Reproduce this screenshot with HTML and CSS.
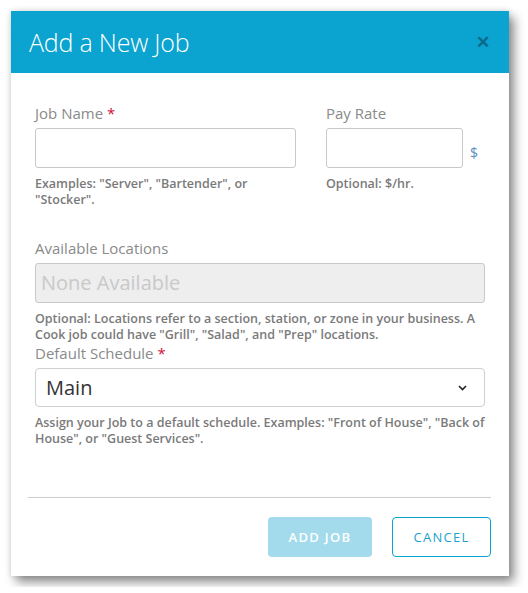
FILE: index.html
```html
<!DOCTYPE html>
<html lang="en">
<head>
    <meta charset="UTF-8">
    <meta name="viewport" content="width=device-width, initial-scale=1.0">
    <title>Add a New Job</title>
    <link rel="stylesheet" href="styles.css">
</head>
<body>
    <div class="modal">
        <div class="modal-header">
            <h1>Add a New Job</h1>
            <span class="close">&#10005;</span>
        </div>

        <div class="modal-body">
            <div class="row">
                <div class="field job-name">
                    <label>Job Name <span class="req">*</span></label>
                    <input type="text" class="text-input">
                    <p class="help">Examples: "Server", "Bartender", or "Stocker".</p>
                </div>
                <div class="field pay-rate">
                    <label>Pay Rate</label>
                    <div class="pay-line">
                        <input type="text" class="text-input">
                        <span class="dollar">$</span>
                    </div>
                    <p class="help">Optional: $/hr.</p>
                </div>
            </div>

            <div class="field locations">
                <label>Available Locations</label>
                <div class="text-input disabled">None Available</div>
                <p class="help">Optional: Locations refer to a section, station, or zone in your business. A Cook job could have "Grill", "Salad", and "Prep" locations.</p>
            </div>

            <div class="field">
                <label>Default Schedule <span class="req">*</span></label>
                <div class="select-wrap">
                    <select class="select">
                        <option>Main</option>
                    </select>
                    <svg class="chevron" width="9" height="6" viewBox="0 0 9 6">
                        <path d="M1 1 L4.5 4.5 L8 1" fill="none" stroke="#222" stroke-width="1.6"/>
                    </svg>
                </div>
                <p class="help">Assign your Job to a default schedule. Examples: "Front of House", "Back of House", or "Guest Services".</p>
            </div>
        </div>

        <div class="modal-footer">
            <div class="actions">
                <button class="btn btn-primary">ADD JOB</button>
                <button class="btn btn-outline">CANCEL</button>
            </div>
        </div>
    </div>
</body>
</html>
```

FILE: styles.css
```css
body {
    margin: 0;
    padding: 11px;
    background: #fff;
    font-family: 'Open Sans', 'Liberation Sans', sans-serif;
}
.modal {
    width: 498px;
    background: #fff;
    box-shadow: 5px 6px 10px rgba(0, 0, 0, 0.45), 0 0 6px rgba(0, 0, 0, 0.12);
}
.modal-header {
    height: 62px;
    background: #0ba3cf;
    display: flex;
    align-items: center;
    justify-content: space-between;
    padding: 0 19px 0 18px;
}
.modal-header h1 {
    margin: 0;
    font-size: 25px;
    font-weight: 300;
    color: #fff;
    letter-spacing: -0.2px;
}
.close {
    color: #0a6a8c;
    font-size: 17px;
    font-weight: bold;
    margin-top: -2px;
}
.modal-body {
    padding: 30px 24px 50px;
}
.row {
    display: flex;
    gap: 30px;
    margin-bottom: 30px;
}
.job-name {
    width: 261px;
}
.pay-rate {
    flex: 1;
}
label {
    display: block;
    font-size: 15px;
    line-height: 20px;
    color: #8a8a8a;
    margin-bottom: 5px;
}
.req {
    color: #d0103a;
}
.text-input {
    box-sizing: border-box;
    display: block;
    width: 100%;
    height: 40px;
    border: 1px solid #c9c9c9;
    border-radius: 3px;
    background: #fff;
    font-family: inherit;
    font-size: 20px;
    outline: none;
}
.pay-line {
    display: flex;
    align-items: center;
}
.pay-line .text-input {
    width: 137px;
}
.dollar {
    margin-left: 7px;
    margin-top: 8px;
    font-size: 14px;
    color: #5a8fbf;
}
.disabled {
    background: #eeeeee;
    color: #c9c9c9;
    padding: 0 5px;
    line-height: 38px;
}
.help {
    margin: 8px 0 0;
    font-size: 12.5px;
    font-weight: 600;
    line-height: 16px;
    color: #7a7a7a;
}
.select-wrap {
    position: relative;
}
.select {
    box-sizing: border-box;
    width: 100%;
    height: 39px;
    border: 1px solid #cfcfcf;
    border-radius: 4px;
    background: #fff;
    font-family: inherit;
    font-size: 20px;
    color: #333;
    padding: 0 10px;
    appearance: none;
    -webkit-appearance: none;
    outline: none;
}
.chevron {
    position: absolute;
    right: 18px;
    top: 17px;
}
.modal-footer {
    padding: 0 18px 19px 17px;
}
.actions {
    border-top: 1px solid #cccccc;
    padding-top: 19px;
    display: flex;
    justify-content: flex-end;
    gap: 20px;
}
.btn {
    height: 40px;
    border-radius: 4px;
    font-family: inherit;
    font-size: 13px;
    letter-spacing: 1.3px;
    cursor: pointer;
}
.btn-primary {
    width: 104px;
    background: #a3dbec;
    border: none;
    color: #fff;
    font-weight: 600;
}
.btn-outline {
    width: 99px;
    background: #fff;
    border: 1px solid #0ba3cf;
    color: #1d9fd0;
}
```
